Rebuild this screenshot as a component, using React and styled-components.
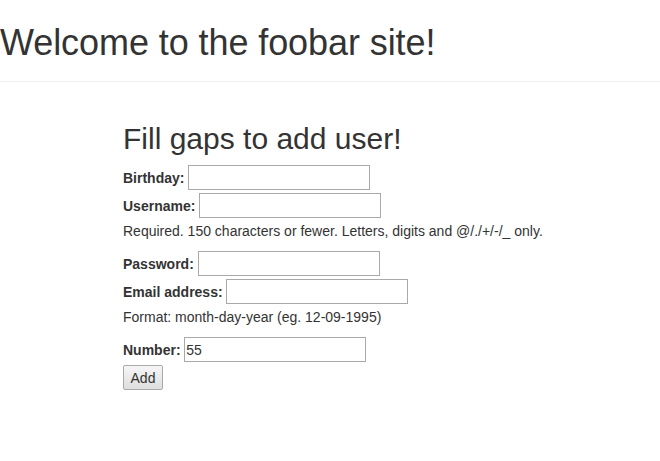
import styled, { createGlobalStyle } from 'styled-components';

const GlobalStyle = createGlobalStyle`
  html, body {
    margin: 0;
    padding: 0;
    background: #fff;
  }
  body {
    font-family: "Liberation Sans", Arial, sans-serif;
    font-size: 14px;
    line-height: 20px;
    color: #333;
  }
`;

const Header = styled.header`
  padding: 23px 0 18px;
  border-bottom: 1px solid #eee;
`;

const Title = styled.h1`
  margin: 0;
  font-size: 36px;
  font-weight: 400;
  line-height: 40px;
  letter-spacing: -0.08px;
`;

const Main = styled.main`
  padding: 40px 0 0 123px;
`;

const FormTitle = styled.h2`
  margin: 0 0 10px;
  font-size: 30px;
  font-weight: 400;
  line-height: 33px;
`;

const Form = styled.form`
  display: flex;
  flex-direction: column;
  align-items: flex-start;
`;

const Row = styled.div`
  display: flex;
  align-items: center;
  gap: 3.7px;
  height: 25px;
  margin-bottom: 3px;
`;

const Label = styled.label`
  font-weight: 700;
`;

const Input = styled.input`
  box-sizing: border-box;
  width: 182px;
  height: 25px;
  margin: 0;
  padding: 1px 1px;
  border: 1px solid #a9a9a9;
  border-radius: 0;
  font-family: "Liberation Sans", Arial, sans-serif;
  font-size: 14px;
  color: #333;
  background: #fff;
`;

const Help = styled.div`
  margin-bottom: 10px;
`;

const Button = styled.button`
  box-sizing: border-box;
  height: 25px;
  width: 40px;
  padding: 0;
  border: 1px solid #a9a9a9;
  border-radius: 2px;
  background: linear-gradient(#f6f6f6, #dedede);
  font-family: "Liberation Sans", Arial, sans-serif;
  font-size: 14px;
  color: #333;
`;

const fields = [
  { label: 'Birthday:', name: 'birthday' },
  { label: 'Username:', name: 'username', help: 'Required. 150 characters or fewer. Letters, digits and @/./+/-/_ only.' },
  { label: 'Password:', name: 'password', type: 'password' },
  { label: 'Email address:', name: 'email', help: 'Format: month-day-year (eg. 12-09-1995)' },
  { label: 'Number:', name: 'number', value: '55' },
];

export default function App() {
  return (
    <>
      <GlobalStyle />
      <Header>
        <Title>Welcome to the foobar site!</Title>
      </Header>
      <Main>
        <FormTitle>Fill gaps to add user!</FormTitle>
        <Form onSubmit={(e) => e.preventDefault()}>
          {fields.map((f) => [
            <Row key={`row-${f.name}`}>
              <Label htmlFor={f.name}>{f.label}</Label>
              <Input id={f.name} type={f.type || 'text'} defaultValue={f.value} />
            </Row>,
            f.help && <Help key={`help-${f.name}`}>{f.help}</Help>,
          ])}
          <Button type="submit">Add</Button>
        </Form>
      </Main>
    </>
  );
}
